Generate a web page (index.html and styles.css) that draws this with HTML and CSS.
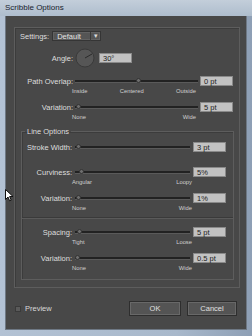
FILE: index.html
```html
<!DOCTYPE html>
<html lang="en">
<head>
  <meta charset="UTF-8" />
  <title>Scribble Options</title>
  <link rel="stylesheet" href="styles.css">
</head>
<body>
  <div class="window">
    <div class="titlebar">Scribble Options</div>
    <div class="frame">
      <div class="dialog">
        <div class="group">
          <div class="settings-row">
            <span class="label">Settings:</span>
            <div class="dropdown"><span class="dropdown-text">Default</span><span class="dropdown-arrow">▾</span></div>
          </div>

          <div class="angle-row">
            <span class="label">Angle:</span>
            <svg class="dial" width="20" height="20" viewBox="0 0 20 20">
              <circle cx="10" cy="10" r="9" fill="#565656" stroke="#3a3a3a" stroke-width="1"/>
              <line x1="10" y1="10" x2="17" y2="6" stroke="#2a2a2a" stroke-width="1"/>
            </svg>
            <div class="field angle-field">30°</div>
          </div>

          <div class="slider-row outer-row first-row">
            <span class="label">Path Overlap:</span>
            <div class="track"><span class="thumb" style="left: 50%"></span></div>
            <div class="field">0 pt</div>
          </div>
          <div class="ticks outer-ticks"><span>Inside</span><span>Centered</span><span>Outside</span></div>

          <div class="slider-row outer-row">
            <span class="label">Variation:</span>
            <div class="track"><span class="thumb" style="left: 2px"></span></div>
            <div class="field">5 pt</div>
          </div>
          <div class="ticks outer-ticks"><span>None</span><span>Wide</span></div>

          <fieldset class="line-options">
            <legend>Line Options</legend>

            <div class="slider-row inner-row stroke-row">
              <span class="label">Stroke Width:</span>
              <div class="track"><span class="thumb" style="left: 2px"></span></div>
              <div class="field">3 pt</div>
            </div>

            <div class="slider-row inner-row curviness-row">
              <span class="label">Curviness:</span>
              <div class="track"><span class="thumb" style="left: 5px"></span></div>
              <div class="field">5%</div>
            </div>
            <div class="ticks inner-ticks"><span>Angular</span><span>Loopy</span></div>

            <div class="slider-row inner-row">
              <span class="label">Variation:</span>
              <div class="track"><span class="thumb" style="left: 2px"></span></div>
              <div class="field">1%</div>
            </div>
            <div class="ticks inner-ticks"><span>None</span><span>Wide</span></div>

            <div class="separator"></div>

            <div class="slider-row inner-row spacing-row">
              <span class="label">Spacing:</span>
              <div class="track"><span class="thumb" style="left: 3px"></span></div>
              <div class="field">5 pt</div>
            </div>
            <div class="ticks inner-ticks"><span>Tight</span><span>Loose</span></div>

            <div class="slider-row inner-row">
              <span class="label">Variation:</span>
              <div class="track"><span class="thumb" style="left: 1px"></span></div>
              <div class="field">0.5 pt</div>
            </div>
            <div class="ticks inner-ticks"><span>None</span><span>Wide</span></div>
          </fieldset>
        </div>

        <div class="footer">
          <div class="preview"><span class="checkbox"></span>Preview</div>
          <div class="buttons">
            <button class="btn btn-ok">OK</button>
            <button class="btn btn-cancel">Cancel</button>
          </div>
        </div>
      </div>
    </div>

    <svg class="cursor" width="9" height="13" viewBox="0 0 9 13">
      <path d="M0.5 0.5 L0.5 10.5 L3 8 L4.6 11.8 L6.2 11.1 L4.6 7.5 L8 7.5 Z" fill="#fff" stroke="#111" stroke-width="1"/>
    </svg>
  </div>
</body>
</html>
```

FILE: styles.css
```css
* {
  box-sizing: border-box;
}

body {
  margin: 0;
  background: #a9b9cc;
  font-family: "Liberation Sans", Arial, sans-serif;
}

.window {
  position: relative;
  width: 252px;
  height: 336px;
  background: linear-gradient(90deg, #b3c2d4 0%, #a8b8cb 70%, #8e9fb5 100%);
}

.titlebar {
  height: 16px;
  padding: 1px 0 0 5px;
  font-size: 8px;
  line-height: 13px;
  color: #18222e;
  background: linear-gradient(#c3ceda, #aebdcd);
}

.frame {
  display: flex;
  height: 320px;
  padding: 0 5px 6px 5px;
}

.dialog {
  flex: 1;
  background: #484848;
  border: 1px solid #6e7884;
  border-top: none;
}

/* outer box */
.group {
  margin: 11px 6px 0 8px;
  padding: 0 0 7px 0;
  border: 1px solid #5d5d5d;
  box-shadow: inset 1px 1px 0 #3c3c3c;
}

.label {
  font-size: 7.5px;
  color: #dedede;
  white-space: nowrap;
}

.settings-row {
  display: flex;
  align-items: center;
  height: 12px;
  margin: 2px 0 0 5px;
}

.dropdown {
  display: flex;
  align-items: center;
  width: 49px;
  height: 10px;
  margin-left: 3px;
  background: #555;
  border: 1px solid #353535;
  box-shadow: inset 0 0 0 1px #626262;
}

.dropdown-text {
  flex: 1;
  padding-left: 4px;
  font-size: 7.5px;
  color: #e4e4e4;
  border-right: 1px solid #3a3a3a;
}

.dropdown-arrow {
  width: 9px;
  text-align: center;
  font-size: 7px;
  line-height: 8px;
  color: #dcdcdc;
}

.angle-row {
  display: grid;
  grid-template-columns: 58px 20px 33px;
  column-gap: 3px;
  align-items: center;
  height: 20px;
  margin-top: 6px;
}

.angle-row .label {
  text-align: right;
}

.angle-row .dial {
  margin-left: -1px;
}

.field {
  height: 10px;
  padding-left: 3px;
  font-size: 7.5px;
  line-height: 9px;
  color: #1e1e1e;
  background: #c2c2c2;
  border: 1px solid #8a8a8a;
  white-space: nowrap;
}

.slider-row {
  display: grid;
  align-items: center;
  height: 10px;
  margin-top: 7px;
}

.slider-row .label {
  text-align: right;
}

.outer-row {
  grid-template-columns: 58px 123px 33px;
  column-gap: 2px;
}

.first-row {
  margin-top: 8px;
}

.inner-row {
  grid-template-columns: 50px 115px 33px;
  column-gap: 3px;
}

.stroke-row {
  margin-top: 6px;
}

.curviness-row {
  margin-top: 15px;
}

.spacing-row {
  margin-top: 8px;
}

.track {
  position: relative;
  height: 2px;
  background: #222;
  box-shadow: 0 1px 0 #5a5a5a;
}

.thumb {
  position: absolute;
  top: -2px;
  width: 5px;
  height: 5px;
  margin-left: -1px;
  border-radius: 50%;
  background: #6e6e6e;
  border: 1px solid #333;
}

.ticks {
  display: flex;
  justify-content: space-between;
  height: 8px;
  margin-top: 1px;
  font-size: 5.8px;
  line-height: 8px;
  color: #d0d0d0;
}

.outer-ticks {
  width: 181px;
  padding-left: 57px;
}

.inner-ticks {
  width: 170px;
  padding-left: 50px;
}

.line-options {
  margin: 6px 5px 0 6px;
  padding: 0 0 7px 0;
  border: 1px solid #5d5d5d;
  box-shadow: inset 1px 1px 0 #3c3c3c;
}

.line-options legend {
  margin-left: 3px;
  padding: 0 2px;
  font-size: 7.5px;
  line-height: 9px;
  color: #dedede;
}

.separator {
  height: 2px;
  margin-top: 5px;
  border-top: 1px solid #3a3a3a;
  border-bottom: 1px solid #5a5a5a;
}

.footer {
  display: flex;
  align-items: center;
  justify-content: space-between;
  margin-top: 13px;
  padding: 0 9px 0 9px;
}

.preview {
  display: flex;
  align-items: center;
  gap: 4px;
  font-size: 7.5px;
  color: #d8d8d8;
}

.checkbox {
  width: 6px;
  height: 6px;
  background: #5a5a5a;
  border: 1px solid #3a3a3a;
}

.buttons {
  display: flex;
  gap: 6px;
}

.btn {
  height: 15px;
  padding: 0;
  font-family: "Liberation Sans", Arial, sans-serif;
  font-size: 7.5px;
  color: #e0e0e0;
  background: #545454;
  border: 1px solid #2e2e2e;
  box-shadow: inset 0 0 0 1px #686868;
}

.btn-ok {
  width: 52px;
}

.btn-cancel {
  width: 50px;
}

.cursor {
  position: absolute;
  left: 5px;
  top: 189px;
}
```
